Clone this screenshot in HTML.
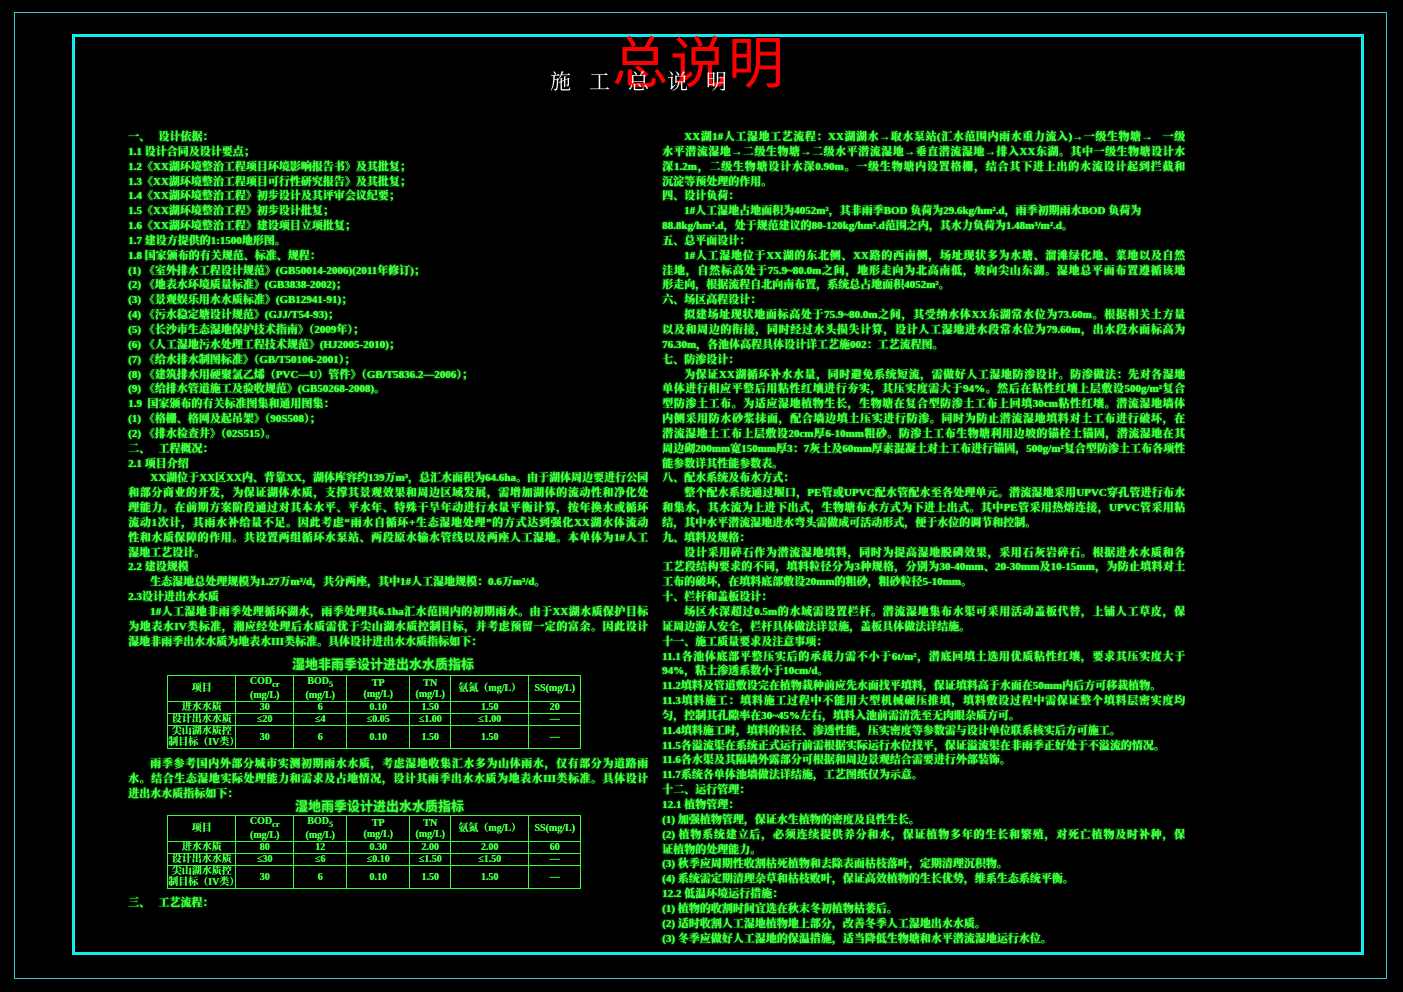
<!DOCTYPE html>
<html><head><meta charset="utf-8"><style>
html,body{margin:0;padding:0;background:#000;}
body{width:1403px;height:992px;position:relative;overflow:hidden;font-family:"Liberation Serif","Noto Serif CJK SC","Noto Sans CJK SC",serif;}
.outer{position:absolute;left:14px;top:12px;width:1373px;height:967px;border:1px solid #3cc;box-sizing:border-box;}
.inner{position:absolute;left:72px;top:34px;width:1292px;height:921px;border:3px solid #1ee;box-sizing:border-box;}
.red{position:absolute;left:612px;top:28px;font-size:56px;color:#f00;font-family:"Noto Sans CJK SC",sans-serif;letter-spacing:2px;line-height:64px;}
.title{position:absolute;left:550px;top:66px;font-size:21px;color:#fff;letter-spacing:18px;line-height:30px;font-family:"Noto Serif CJK SC",serif;}
.col{position:absolute;color:#4f4;font-size:11px;line-height:14.85px;font-weight:bold;text-shadow:0.5px 0 0 #3f3,0 0 2px #2f2;}
.col div{white-space:nowrap;height:14.85px;}
.col div.j{text-align:justify;text-align-last:justify;white-space:normal;overflow:hidden;}
.l{left:128px;top:130px;width:520px;}
.r{left:662px;top:130px;width:523px;}
.i{text-indent:22px;}
.tt{position:absolute;color:#4f4;font-size:13px;font-weight:bold;font-family:"Noto Sans CJK SC",sans-serif;text-shadow:0 0 2px #2f2;}
table{position:absolute;border-collapse:collapse;color:#4f4;font-size:10px;font-weight:bold;text-shadow:0.5px 0 0 #3f3;}
td{border:1px solid #3f3;text-align:center;padding:0;line-height:11px;}
</style></head><body>
<div class="outer"></div>
<div class="inner"></div>
<div class="red">总说明</div>
<div class="title">施工总说明</div>

<div class="col l">
<div>一、&nbsp;&nbsp;&nbsp;设计依据：</div>
<div>1.1 设计合同及设计要点；</div>
<div>1.2《XX湖环境整治工程项目环境影响报告书》及其批复；</div>
<div>1.3《XX湖环境整治工程项目可行性研究报告》及其批复；</div>
<div>1.4《XX湖环境整治工程》初步设计及其评审会议纪要；</div>
<div>1.5《XX湖环境整治工程》初步设计批复；</div>
<div>1.6《XX湖环境整治工程》建设项目立项批复；</div>
<div>1.7 建设方提供的1:1500地形图。</div>
<div>1.8 国家颁布的有关规范、标准、规程：</div>
<div>(1) 《室外排水工程设计规范》(GB50014-2006)(2011年修订)；</div>
<div>(2) 《地表水环境质量标准》(GB3838-2002)；</div>
<div>(3) 《景观娱乐用水水质标准》(GB12941-91)；</div>
<div>(4) 《污水稳定塘设计规范》(GJJ/T54-93)；</div>
<div>(5) 《长沙市生态湿地保护技术指南》（2009年）；</div>
<div>(6) 《人工湿地污水处理工程技术规范》(HJ2005-2010)；</div>
<div>(7) 《给水排水制图标准》（GB/T50106-2001）；</div>
<div>(8) 《建筑排水用硬聚氯乙烯（PVC—U）管件》（GB/T5836.2—2006）；</div>
<div>(9) 《给排水管道施工及验收规范》(GB50268-2008)。</div>
<div>1.9&nbsp; 国家颁布的有关标准图集和通用图集：</div>
<div>(1) 《格栅、格网及起吊架》（90S508）；</div>
<div>(2) 《排水检查井》（02S515）。</div>
<div>二、&nbsp;&nbsp;&nbsp;工程概况：</div>
<div>2.1 项目介绍</div>
<div class="j i">XX湖位于XX区XX内、背靠XX，湖体库容约139万m³，总汇水面积为64.6ha。由于湖体周边要进行公园</div>
<div class="j">和部分商业的开发，为保证湖体水质，支撑其景观效果和周边区域发展，需增加湖体的流动性和净化处</div>
<div class="j">理能力。在前期方案阶段通过对其本水平、平水年、特殊干旱年动进行水量平衡计算，按年换水或循环</div>
<div class="j">流动1次计，其雨水补给量不足。因此考虑“雨水自循环+生态湿地处理”的方式达到强化XX湖水体流动</div>
<div class="j">性和水质保障的作用。共设置两组循环水泵站、两段原水输水管线以及两座人工湿地。本单体为1#人工</div>
<div>湿地工艺设计。</div>
<div>2.2 建设规模</div>
<div class="i">生态湿地总处理规模为1.27万m³/d，共分两座，其中1#人工湿地规模：0.6万m³/d。</div>
<div>2.3设计进出水水质</div>
<div class="j i">1#人工湿地非雨季处理循环湖水，雨季处理其6.1ha汇水范围内的初期雨水。由于XX湖水质保护目标</div>
<div class="j">为地表水IV类标准，湘应经处理后水质需优于尖山湖水质控制目标，并考虑预留一定的富余。因此设计</div>
<div>湿地非雨季出水水质为地表水III类标准。具体设计进出水水质指标如下：</div>
</div>

<div class="tt" style="left:292px;top:654px;">湿地非雨季设计进出水水质指标</div>
<table style="left:167px;top:675px;width:414px;height:74px;">
<tr style="height:25px"><td style="width:67px">项目</td><td style="width:57px">COD<sub>cr</sub><br>(mg/L)</td><td style="width:52px">BOD<sub>5</sub><br>(mg/L)</td><td style="width:62px">TP<br>(mg/L)</td><td style="width:40px">TN<br>(mg/L)</td><td style="width:77px">氨氮（mg/L）</td><td>SS(mg/L)</td></tr>
<tr><td>进水水质</td><td>30</td><td>6</td><td>0.10</td><td>1.50</td><td>1.50</td><td>20</td></tr>
<tr><td>设计出水水质</td><td>≤20</td><td>≤4</td><td>≤0.05</td><td>≤1.00</td><td>≤1.00</td><td>—</td></tr>
<tr style="height:22px"><td>尖山湖水质控<br>制目标（IV类）</td><td>30</td><td>6</td><td>0.10</td><td>1.50</td><td>1.50</td><td>—</td></tr>
</table>

<div class="col l" style="top:757px">
<div class="j i">雨季参考国内外部分城市实测初期雨水水质，考虑湿地收集汇水多为山体雨水，仅有部分为道路雨</div>
<div class="j">水。结合生态湿地实际处理能力和需求及占地情况，设计其雨季出水水质为地表水III类标准。具体设计</div>
<div>进出水水质指标如下：</div>
</div>
<div class="tt" style="left:295px;top:796px;">湿地雨季设计进出水水质指标</div>
<table style="left:167px;top:815px;width:414px;height:74px;">
<tr style="height:25px"><td style="width:67px">项目</td><td style="width:57px">COD<sub>cr</sub><br>(mg/L)</td><td style="width:52px">BOD<sub>5</sub><br>(mg/L)</td><td style="width:62px">TP<br>(mg/L)</td><td style="width:40px">TN<br>(mg/L)</td><td style="width:77px">氨氮（mg/L）</td><td>SS(mg/L)</td></tr>
<tr><td>进水水质</td><td>80</td><td>12</td><td>0.30</td><td>2.00</td><td>2.00</td><td>60</td></tr>
<tr><td>设计出水水质</td><td>≤30</td><td>≤6</td><td>≤0.10</td><td>≤1.50</td><td>≤1.50</td><td>—</td></tr>
<tr style="height:22px"><td>尖山湖水质控<br>制目标（IV类）</td><td>30</td><td>6</td><td>0.10</td><td>1.50</td><td>1.50</td><td>—</td></tr>
</table>
<div class="col l" style="top:896px"><div>三、&nbsp;&nbsp;&nbsp;工艺流程：</div></div>

<div class="col r">
<div class="j i">XX湖1#人工湿地工艺流程：XX湖湖水→取水泵站(汇水范围内雨水重力流入)→一级生物塘→&nbsp;&nbsp;&nbsp;一级</div>
<div class="j">水平潜流湿地→二级生物塘→二级水平潜流湿地→垂直潜流湿地→排入XX东湖。其中一级生物塘设计水</div>
<div class="j">深1.2m，二级生物塘设计水深0.90m。一级生物塘内设置格栅，结合其下进上出的水流设计起到拦截和</div>
<div>沉淀等预处理的作用。</div>
<div>四、设计负荷：</div>
<div class="i">1#人工湿地占地面积为4052m²，其非雨季BOD 负荷为29.6kg/hm².d，雨季初期雨水BOD 负荷为</div>
<div>88.8kg/hm².d，处于规范建议的80-120kg/hm².d范围之内，其水力负荷为1.48m³/m².d。</div>
<div>五、总平面设计：</div>
<div class="j i">1#人工湿地位于XX湖的东北侧、XX路的西南侧，场址现状多为水塘、溜滩绿化地、菜地以及自然</div>
<div class="j">洼地，自然标高处于75.9~80.0m之间，地形走向为北高南低，坡向尖山东湖。湿地总平面布置遵循该地</div>
<div>形走向，根据流程自北向南布置，系统总占地面积4052m²。</div>
<div>六、场区高程设计：</div>
<div class="j i">拟建场址现状地面标高处于75.9~80.0m之间，其受纳水体XX东湖常水位为73.60m。根据相关土方量</div>
<div class="j">以及和周边的衔接，同时经过水头损失计算，设计人工湿地进水段常水位为79.60m，出水段水面标高为</div>
<div>76.30m，各池体高程具体设计详工艺施002：工艺流程图。</div>
<div>七、防渗设计：</div>
<div class="j i">为保证XX湖循环补水水量，同时避免系统短流，需做好人工湿地防渗设计。防渗做法：先对各湿地</div>
<div class="j">单体进行相应平整后用粘性红壤进行夯实，其压实度需大于94%。然后在粘性红壤上层敷设500g/m²复合</div>
<div class="j">型防渗土工布。为适应湿地植物生长，生物塘在复合型防渗土工布上回填30cm粘性红壤。潜流湿地墙体</div>
<div class="j">内侧采用防水砂浆抹面，配合墙边填土压实进行防渗。同时为防止潜流湿地填料对土工布进行破坏，在</div>
<div class="j">潜流湿地土工布上层敷设20cm厚6-10mm粗砂。防渗土工布生物塘利用边坡的锚栓土锚固，潜流湿地在其</div>
<div class="j">周边砌200mm宽150mm厚3：7灰土及60mm厚素混凝土对土工布进行锚固，500g/m²复合型防渗土工布各项性</div>
<div>能参数详其性能参数表。</div>
<div>八、配水系统及布水方式：</div>
<div class="j i">整个配水系统通过堰口，PE管或UPVC配水管配水至各处理单元。潜流湿地采用UPVC穿孔管进行布水</div>
<div class="j">和集水，其水流为上进下出式，生物塘布水方式为下进上出式。其中PE管采用热熔连接，UPVC管采用粘</div>
<div>结，其中水平潜流湿地进水弯头需做成可活动形式，便于水位的调节和控制。</div>
<div>九、填料及规格：</div>
<div class="j i">设计采用碎石作为潜流湿地填料，同时为提高湿地脱磷效果，采用石灰岩碎石。根据进水水质和各</div>
<div class="j">工艺段结构要求的不同，填料粒径分为3种规格，分别为30-40mm、20-30mm及10-15mm，为防止填料对土</div>
<div>工布的破坏，在填料底部敷设20mm的粗砂，粗砂粒径5-10mm。</div>
<div>十、栏杆和盖板设计：</div>
<div class="j i">场区水深超过0.5m的水域需设置栏杆。潜流湿地集布水渠可采用活动盖板代替，上铺人工草皮，保</div>
<div>证周边游人安全，栏杆具体做法详景施，盖板具体做法详结施。</div>
<div>十一、施工质量要求及注意事项：</div>
<div class="j">11.1各池体底部平整压实后的承载力需不小于6t/m²，潜底回填土选用优质粘性红壤，要求其压实度大于</div>
<div>94%，粘土渗透系数小于10cm/d。</div>
<div>11.2填料及管道敷设完在植物栽种前应先水面找平填料，保证填料高于水面在50mm内后方可移栽植物。</div>
<div class="j">11.3填料施工：填料施工过程中不能用大型机械碾压推填，填料敷设过程中需保证整个填料层密实度均</div>
<div>匀，控制其孔隙率在30~45%左右，填料入池前需清洗至无肉眼杂质方可。</div>
<div>11.4填料施工时，填料的粒径、渗透性能，压实密度等参数需与设计单位联系核实后方可施工。</div>
<div>11.5各溢流渠在系统正式运行前需根据实际运行水位找平，保证溢流渠在非雨季正好处于不溢流的情况。</div>
<div>11.6各水渠及其隔墙外露部分可根据和周边景观结合需要进行外部装饰。</div>
<div>11.7系统各单体池墙做法详结施，工艺图纸仅为示意。</div>
<div>十二、运行管理：</div>
<div>12.1 植物管理：</div>
<div>(1) 加强植物管理，保证水生植物的密度及良性生长。</div>
<div class="j">(2) 植物系统建立后，必须连续提供养分和水，保证植物多年的生长和繁殖，对死亡植物及时补种，保</div>
<div>证植物的处理能力。</div>
<div>(3) 秋季应周期性收割枯死植物和去除表面枯枝落叶，定期清理沉积物。</div>
<div>(4) 系统需定期清理杂草和枯枝败叶，保证高效植物的生长优势，维系生态系统平衡。</div>
<div>12.2 低温环境运行措施：</div>
<div>(1) 植物的收割时间宜选在秋末冬初植物枯萎后。</div>
<div>(2) 适时收割人工湿地植物地上部分，改善冬季人工湿地出水水质。</div>
<div>(3) 冬季应做好人工湿地的保温措施，适当降低生物塘和水平潜流湿地运行水位。</div>
</div>
</body></html>
